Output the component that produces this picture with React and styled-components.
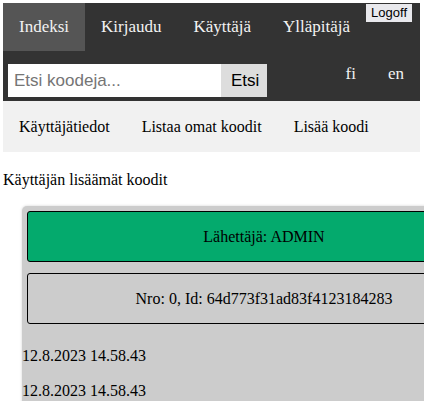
import styled, { createGlobalStyle } from "styled-components";

const GlobalStyle = createGlobalStyle`
  html {
    overflow: hidden;
  }
  body {
    margin: 3px 0 0 3px;
    font-family: "Liberation Serif", "Times New Roman", serif;
    font-size: 16px;
    color: #000;
    background: #fff;
  }
`;

const TopNav = styled.nav`
  margin-right: 4px;
  background-color: #333;
`;

const NavRow = styled.div`
  display: flex;
  align-items: flex-start;
  height: 48px;
`;

const NavLink = styled.a`
  display: block;
  padding: 14px 16px;
  font-size: 17px;
  line-height: 20px;
  color: #f2f2f2;
  text-decoration: none;
  background-color: ${(p) => (p.$active ? "#555" : "transparent")};
`;

const LogoffButton = styled.button`
  margin-top: 1px;
  height: 18px;
  padding: 0 5px;
  border: none;
  background: #e9e9ed;
  font-family: "Liberation Sans", Arial, sans-serif;
  font-size: 13px;
  line-height: 18px;
  color: #000;
`;

const SearchRow = styled.div`
  display: flex;
  justify-content: space-between;
  align-items: flex-start;
  height: 50px;
`;

const SearchForm = styled.form`
  display: flex;
  margin: 13px 0 0 5px;
`;

const SearchInput = styled.input`
  box-sizing: border-box;
  width: 213px;
  height: 33px;
  padding: 6px;
  border: none;
  outline: none;
  font-family: "Liberation Sans", Arial, sans-serif;
  font-size: 17px;

  &::placeholder {
    color: #757575;
  }
`;

const SearchButton = styled.button`
  box-sizing: border-box;
  width: 46px;
  height: 33px;
  padding: 0 10px;
  border: none;
  background: #ddd;
  font-family: "Liberation Sans", Arial, sans-serif;
  font-size: 17px;
  color: #000;
`;

const LangLinks = styled.div`
  display: flex;
`;

const LangLink = styled.a`
  display: block;
  padding: 13px 16px 0;
  font-size: 17px;
  line-height: 20px;
  color: #f2f2f2;
  text-decoration: none;
`;

const SubNav = styled.nav`
  display: flex;
  height: 51px;
  margin-right: 4px;
  background-color: #f1f1f1;
`;

const SubLink = styled.a`
  display: block;
  padding: 0 16px;
  line-height: 51px;
  font-size: 16px;
  color: #000;
  text-decoration: none;
`;

const Heading = styled.p`
  margin: 19px 0 17px;
  line-height: 18px;
`;

const Card = styled.div`
  box-sizing: border-box;
  width: 484px;
  margin-left: 19px;
  padding: 5px 5px 0;
  background: #ccc;
  border-radius: 5px;
  box-shadow: 0 0 3px rgba(0, 0, 0, 0.18);
`;

const InfoBox = styled.div`
  box-sizing: border-box;
  height: 51px;
  margin-bottom: ${(p) => p.$gap}px;
  display: flex;
  align-items: center;
  justify-content: center;
  border: 1px solid #000;
  border-radius: 3px;
  background: ${(p) => p.$bg || "transparent"};
`;

const DateList = styled.div`
  display: flex;
  flex-direction: column;
  gap: 17px;
  padding-top: 23px;
  padding-bottom: 20px;
  margin-left: -5px;
`;

const DateLine = styled.div`
  line-height: 18px;
`;

export default function App() {
  return (
    <>
      <GlobalStyle />
      <TopNav>
        <NavRow>
          <NavLink $active>Indeksi</NavLink>
          <NavLink>Kirjaudu</NavLink>
          <NavLink>Käyttäjä</NavLink>
          <NavLink>Ylläpitäjä</NavLink>
          <LogoffButton>Logoff</LogoffButton>
        </NavRow>
        <SearchRow>
          <SearchForm onSubmit={(e) => e.preventDefault()}>
            <SearchInput placeholder="Etsi koodeja..." />
            <SearchButton>Etsi</SearchButton>
          </SearchForm>
          <LangLinks>
            <LangLink>fi</LangLink>
            <LangLink>en</LangLink>
          </LangLinks>
        </SearchRow>
      </TopNav>
      <SubNav>
        <SubLink>Käyttäjätiedot</SubLink>
        <SubLink>Listaa omat koodit</SubLink>
        <SubLink>Lisää koodi</SubLink>
      </SubNav>
      <Heading>Käyttäjän lisäämät koodit</Heading>
      <Card>
        <InfoBox $bg="#04aa6d" $gap={11}>Lähettäjä: ADMIN</InfoBox>
        <InfoBox $gap={0}>Nro: 0, Id: 64d773f31ad83f4123184283</InfoBox>
        <DateList>
          <DateLine>12.8.2023 14.58.43</DateLine>
          <DateLine>12.8.2023 14.58.43</DateLine>
        </DateList>
      </Card>
    </>
  );
}
